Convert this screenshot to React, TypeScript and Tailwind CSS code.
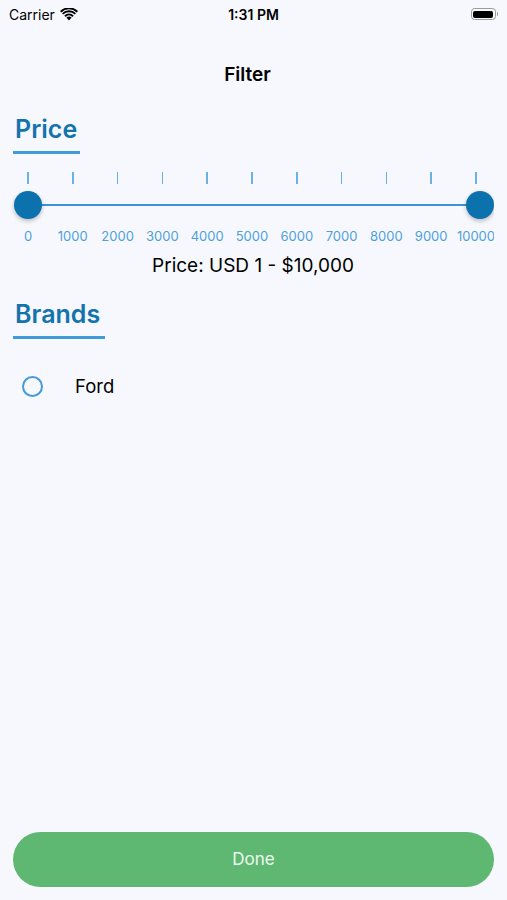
import React from "react";

const ticks = [0, 1000, 2000, 3000, 4000, 5000, 6000, 7000, 8000, 9000, 10000];

function StatusBar() {
  return (
    <div className="h-[28px] flex items-center justify-between px-[9px] text-[14px] text-black">
      <div className="flex items-center gap-[5px] w-[120px]">
        <span>Carrier</span>
        <svg width="18" height="13" viewBox="0 0 18 13">
          <path d="M9 12.5 L6.4 9.6 A3.8 3.8 0 0 1 11.6 9.6 Z" fill="#000" />
          <path d="M4.3 7.5 A6.8 6.8 0 0 1 13.7 7.5 L12.4 8.9 A5 5 0 0 0 5.6 8.9 Z" fill="#000" />
          <path d="M2 5.2 A10 10 0 0 1 16 5.2 L14.7 6.6 A8.2 8.2 0 0 0 3.3 6.6 Z" fill="#000" />
          <path d="M0 3 A13 13 0 0 1 18 3 L16.7 4.4 A11.2 11.2 0 0 0 1.3 4.4 Z" fill="#000" />
        </svg>
      </div>
      <span className="font-semibold">1:31 PM</span>
      <div className="w-[120px] flex justify-end">
        <div className="flex items-center">
          <div className="w-[25px] h-[12px] rounded-[3.5px] border border-[#9a9a9a] p-[1.5px]">
            <div className="w-full h-full bg-black rounded-[2px]" />
          </div>
          <div className="w-[1.5px] h-[4px] bg-[#9a9a9a] rounded-r-sm ml-[1px]" />
        </div>
      </div>
    </div>
  );
}

function SectionTitle({ text, width }: { text: string; width: string }) {
  return (
    <div className="px-[13px]">
      <div className={`${width} border-b-[3px] border-[#3f9bd9]`}>
        <h2 className="pl-[2px] text-[25px] font-semibold text-[#1373ad] leading-[34px] pb-[5px]">{text}</h2>
      </div>
    </div>
  );
}

export default function App() {
  return (
    <div
      className="w-[507px] h-[900px] bg-[#f7f8fd] flex flex-col"
      style={{ fontFamily: "Inter, 'Noto Sans', sans-serif" }}
    >
      <StatusBar />
      <div className="h-[59px] flex items-end justify-center pr-[12px]">
        <span className="text-[19px] font-semibold text-black leading-[24px]">Filter</span>
      </div>

      <div className="mt-[25px]">
        <SectionTitle text="Price" width="w-[67px]" />
      </div>

      <div className="mt-[18px] w-[494px] overflow-hidden">
        <div className="flex pl-[5.6px]">
          {ticks.map((t) => (
            <div key={t} className="w-[44.8px] shrink-0 flex justify-center">
              <div className="w-[1.5px] h-[12px] bg-[#6cb1e3]" />
            </div>
          ))}
        </div>
        <div className="relative h-[40px]">
          <div className="absolute left-[28px] w-[452px] top-[20px] h-[2px] bg-[#3b92d8]" />
          <div className="absolute left-[14px] top-[7px] w-[28px] h-[28px] rounded-full bg-[#0b72ad] shadow-[0_2px_4px_rgba(0,0,0,0.25)]" />
          <div className="absolute left-[466px] top-[7px] w-[28px] h-[28px] rounded-full bg-[#0b72ad] shadow-[0_2px_4px_rgba(0,0,0,0.25)]" />
        </div>
        <div className="flex pl-[5.6px] mt-[3px]">
          {ticks.map((t) => (
            <div key={t} className="w-[44.8px] shrink-0 text-center text-[13px] leading-[18px] text-[#4ea0dc]">
              {t}
            </div>
          ))}
        </div>
      </div>

      <div className="text-center text-[19px] leading-[24px] text-black mt-[9px] pr-[1px]">
        Price: USD 1 - $10,000
      </div>

      <div className="mt-[19px]">
        <SectionTitle text="Brands" width="w-[92px]" />
      </div>

      <div className="flex items-center px-[22px] mt-[35px]">
        <div className="w-[21px] h-[21px] rounded-full border-[2.5px] border-[#3f9bd9]" />
        <span className="ml-[32px] text-[18.5px] leading-[24px] text-black">Ford</span>
      </div>

      <div className="flex-1" />

      <div className="px-[13px] pb-[13px]">
        <button className="w-full h-[55px] rounded-full bg-[#5fb872] text-[#eef8f0] text-[17px]">
          Done
        </button>
      </div>
    </div>
  );
}
